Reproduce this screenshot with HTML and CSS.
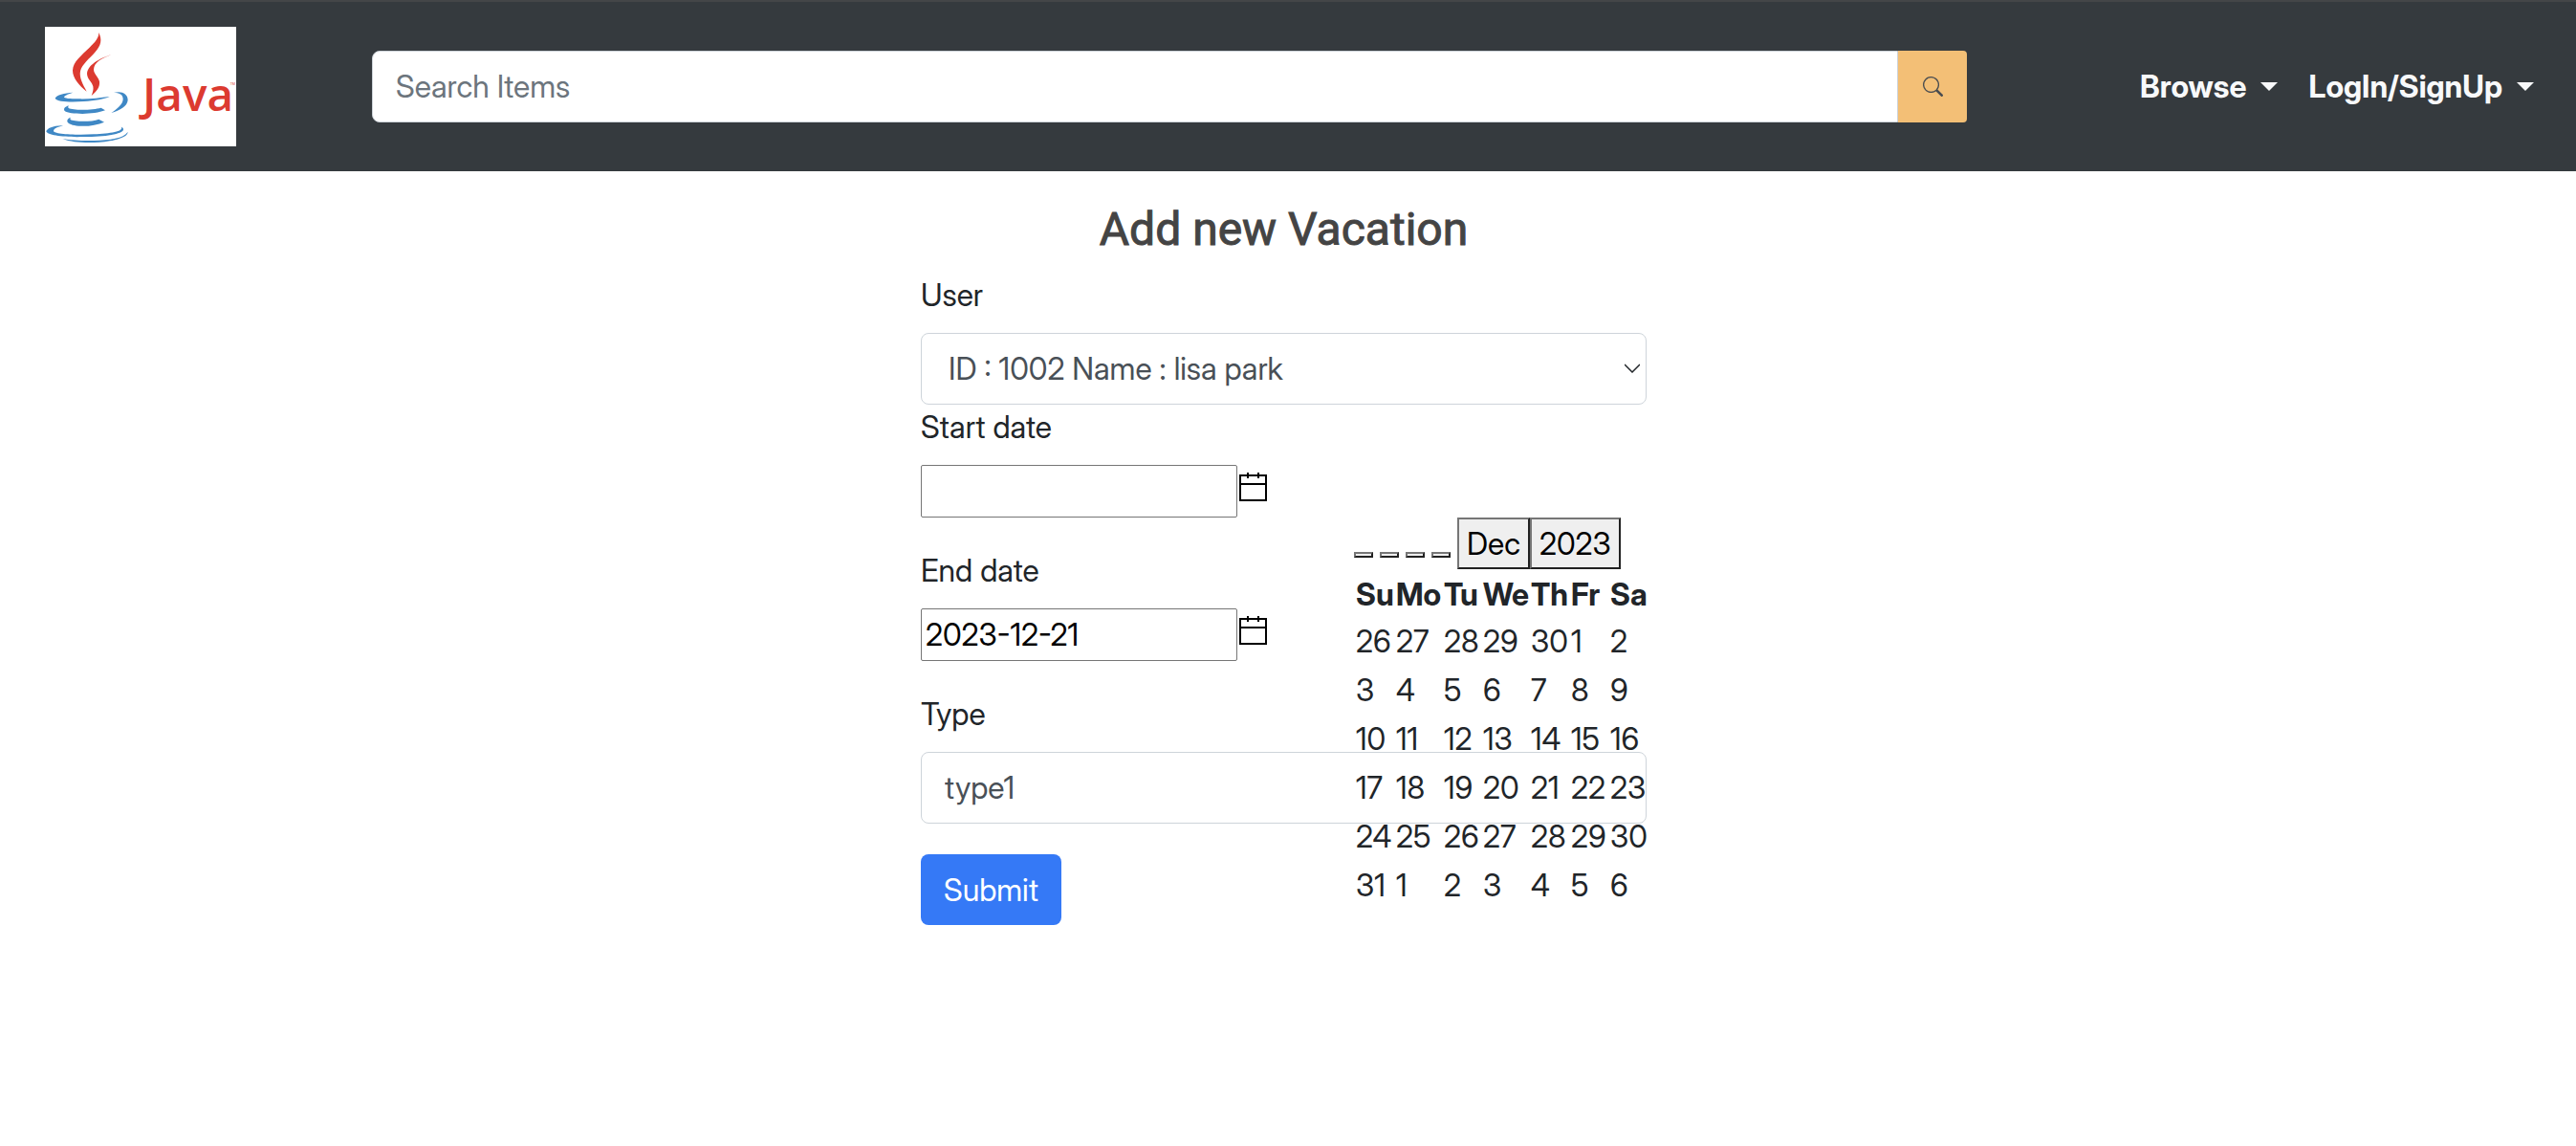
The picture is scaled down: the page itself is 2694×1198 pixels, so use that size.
FILE: index.html
```html
<!DOCTYPE html>
<html lang="en">
<head>
<meta charset="utf-8">
<title>Add new Vacation</title>
<link rel="stylesheet" href="styles.css">
</head>
<body>
<header class="navbar">
  <a class="brand" href="#" aria-label="Java home">
    <svg class="logo" viewBox="21 24 600 375" role="img" aria-label="Java">
      <g fill="#dc3a30">
        <path d="M190 42C201 66 197 82 179 103C160 125 138 141 132 163C128 184 140 205 152 227C128 208 108 184 108 161C109 133 137 113 160 90C178 72 190 60 190 42Z"/>
        <path d="M228 112C203 120 157 139 153 170C153 188 169 196 172 211C174 221 171 230 167 240C184 226 194 213 192 196C190 182 175 174 174 158C175 136 199 123 228 112Z"/>
        <text class="logo-word" x="327" y="289">Java</text>
        <text class="logo-mark" x="602" y="208">TM</text>
      </g>
      <g fill="#3f88c5">
        <path d="M109 230C82 231 56 239 53 248C58 260 105 261 143 258C177 256 207 251 224 243C193 247 159 251 127 250C99 250 80 249 81 244C84 238 98 234 109 230Z"/>
        <path d="M237 231C260 224 281 233 281 254C279 273 257 286 229 294C248 281 265 267 266 251C266 236 254 231 237 231Z"/>
        <path d="M96 271C83 275 78 282 83 288C98 299 174 301 210 286L197 278C174 285 111 287 95 279C93 276 94 273 96 271Z"/>
        <path d="M102 308C90 312 88 321 95 326C112 339 172 339 207 323L190 314C167 323 112 322 101 315C100 312 100 310 102 308Z"/>
        <path d="M78 334C48 333 27 343 25 352C28 365 86 371 143 369C211 369 264 360 267 347C268 342 264 339 260 338C270 352 225 358 174 361C111 364 47 360 48 350C49 342 66 337 78 334Z"/>
        <path d="M281 354C267 375 226 379 176 381C139 382 104 380 76 375C105 387 153 389 190 386C239 383 281 371 281 354Z"/>
      </g>
    </svg>
  </a>
  <form class="search" role="search">
    <input class="search-input" type="search" placeholder="Search Items" aria-label="Search Items">
    <button class="search-button" type="button" aria-label="Search">
      <svg class="search-icon" viewBox="0 0 16 16" fill="currentColor"><path d="M11.742 10.344a6.5 6.5 0 1 0-1.397 1.398h-.001c.03.04.062.078.098.115l3.85 3.85a1 1 0 0 0 1.415-1.414l-3.85-3.85a1.007 1.007 0 0 0-.115-.1zM12 6.5a5.5 5.5 0 1 1-11 0 5.5 5.5 0 0 1 11 0z"/></svg>
    </button>
  </form>
  <nav class="menu">
    <a class="menu-link" href="#">Browse</a>
    <a class="menu-link" href="#">LogIn/SignUp</a>
  </nav>
</header>

<main class="page">
  <form class="vacation">
    <h1 class="title">Add new Vacation</h1>

    <label class="label" for="user">User</label>
    <div class="select-wrap">
      <select class="control user-select" id="user"><option>ID : 1002 Name : lisa park</option></select>
      <svg class="chevron" viewBox="0 0 16 10" fill="none" stroke="currentColor" stroke-width="1.5"><path d="M0 1L8 9L16 1"/></svg>
    </div>

    <label class="label" for="start">Start date</label>
    <div class="date-field">
      <input class="date-input" id="start" type="text">
      <button class="date-toggle" type="button" aria-label="Choose start date">
        <svg class="calendar-icon" viewBox="0 0 29 30" fill="none" stroke="currentColor" stroke-width="2"><path d="M1 3H28V29H1ZM1 12H28M9 0V6M20 0V6"/></svg>
      </button>
      <div class="datepicker">
        <div class="picker-nav">
          <button class="step" type="button" aria-label="Previous year"></button>
          <button class="step" type="button" aria-label="Previous month"></button>
          <button class="step" type="button" aria-label="Next month"></button>
          <button class="step" type="button" aria-label="Next year"></button>
          <div class="period"><button class="month" type="button">Dec</button><button class="year" type="button">2023</button></div>
        </div>
        <table class="days">
          <colgroup><col class="mid"><col class="wide"><col class="slim"><col class="wide"><col class="mid"><col class="slim"><col class="slim"></colgroup>
          <thead><tr><th>Su</th><th>Mo</th><th>Tu</th><th>We</th><th>Th</th><th>Fr</th><th>Sa</th></tr></thead>
          <tbody>
            <tr><td>26</td><td>27</td><td>28</td><td>29</td><td>30</td><td>1</td><td>2</td></tr>
            <tr><td>3</td><td>4</td><td>5</td><td>6</td><td>7</td><td>8</td><td>9</td></tr>
            <tr><td>10</td><td>11</td><td>12</td><td>13</td><td>14</td><td>15</td><td>16</td></tr>
            <tr><td>17</td><td>18</td><td>19</td><td>20</td><td>21</td><td>22</td><td>23</td></tr>
            <tr><td>24</td><td>25</td><td>26</td><td>27</td><td>28</td><td>29</td><td>30</td></tr>
            <tr><td>31</td><td>1</td><td>2</td><td>3</td><td>4</td><td>5</td><td>6</td></tr>
          </tbody>
        </table>
      </div>
    </div>

    <label class="label" for="end">End date</label>
    <div class="date-field">
      <input class="date-input" id="end" type="text" value="2023-12-21">
      <button class="date-toggle" type="button" aria-label="Choose end date">
        <svg class="calendar-icon" viewBox="0 0 29 30" fill="none" stroke="currentColor" stroke-width="2"><path d="M1 3H28V29H1ZM1 12H28M9 0V6M20 0V6"/></svg>
      </button>
    </div>

    <label class="label" for="type">Type</label>
    <input class="control type-input" id="type" type="text" value="type1">

    <button class="submit" type="button">Submit</button>
  </form>
</main>
</body>
</html>
```
FILE: styles.css
```css
* { box-sizing: border-box; }

body {
  margin: 0;
  background: #fff;
  color: #212529;
  font: 32px/47px "Inter Display", Inter, "Liberation Sans", sans-serif;
}

input, select, button { margin: 0; font: inherit; }

.navbar {
  display: flex;
  align-items: center;
  padding: 26px 44px 26px 47px;
  border-top: 2px solid #444648;
  background: #353a3e;
}

.brand { display: block; }
.logo { display: block; width: 200px; height: 125px; background: #fff; }
.logo-word { font: 600 143px "Open Sans", sans-serif; }
.logo-mark { font: 11px "Open Sans", sans-serif; }

.search {
  display: flex;
  flex: 1;
  height: 75px;
  margin: 0 181px 0 142px;
}
.search-input {
  flex: 1;
  min-width: 0;
  padding: 0 24px;
  border: 1px solid #ced4da;
  border-radius: 8px 0 0 8px;
  background: #fff;
  appearance: none;
}
.search-input::placeholder { color: #6c757d; opacity: 1; }
.search-button {
  display: flex;
  align-items: center;
  justify-content: center;
  width: 72px;
  padding: 0;
  border: 0;
  border-radius: 0 4px 4px 0;
  background: #f3bf76;
  color: #4a4d50;
}
.search-icon { width: 21px; height: 21px; }

.menu {
  display: flex;
  justify-content: space-between;
  width: 412px;
}
.menu-link {
  display: flex;
  align-items: center;
  gap: 15px;
  color: #f8f9fa;
  font-weight: 700;
  text-decoration: none;
}
.menu-link::after {
  content: "";
  border: 9px solid transparent;
  border-top-color: currentColor;
  border-bottom: 0;
}

.page {
  display: grid;
  grid-template-columns: 963fr 759fr 972fr;
  padding: 32px 0;
}
.vacation {
  display: flex;
  grid-column: 2;
  flex-direction: column;
}
.title {
  margin: 0 0 16px;
  color: #444;
  font: 400 48px/58px Roboto, sans-serif;
  text-align: center;
  -webkit-text-stroke: 1px currentColor;
}
.label { align-self: flex-start; margin-bottom: 16px; }

.control {
  width: 100%;
  height: 75px;
  border: 1px solid #ced4da;
  border-radius: 8px;
  background: #fff;
  color: #495057;
  appearance: none;
}
.select-wrap { position: relative; }
.user-select { display: block; padding: 0 28px; }
.chevron {
  position: absolute;
  top: 32px;
  right: 7px;
  width: 16px;
  height: 10px;
  pointer-events: none;
}

.date-field {
  display: flex;
  position: relative;
  margin-bottom: 32px;
}
.date-input {
  width: 331px;
  height: 55px;
  padding: 0 4px;
  border: 1px solid #767676;
  border-radius: 2px;
  background: #fff;
  color: #000;
}
.date-toggle {
  align-self: flex-start;
  padding: 8px 2px;
  border: 0;
  background: none;
  color: #000;
}
.calendar-icon { display: block; width: 29px; height: 30px; }

.datepicker {
  position: absolute;
  top: 100%;
  right: 0;
  width: 306px;
}
.picker-nav { display: flex; align-items: flex-end; gap: 7px; }
.step, .month, .year {
  border: 2px solid;
  border-color: #767676 #212121 #212121 #767676;
  background: #efefef;
  color: #000;
}
.step { width: 20px; height: 6px; margin-bottom: 12px; padding: 0; }
.period { display: flex; }
.month, .year { height: 54px; padding: 0 8px; }

.days { width: 100%; border-collapse: collapse; table-layout: fixed; }
.mid { width: 42px; }
.wide { width: 50px; }
.slim { width: 41px; }
.days th, .days td { height: 51px; padding: 0 2px; text-align: left; white-space: nowrap; }
.days th { height: 50px; padding-top: 3px; }

.type-input { padding: 0 24px; }
.submit {
  align-self: flex-start;
  height: 74px;
  margin-top: 32px;
  padding: 0 24px;
  border: 0;
  border-radius: 8px;
  background: #3579f6;
  color: #fff;
}
```
